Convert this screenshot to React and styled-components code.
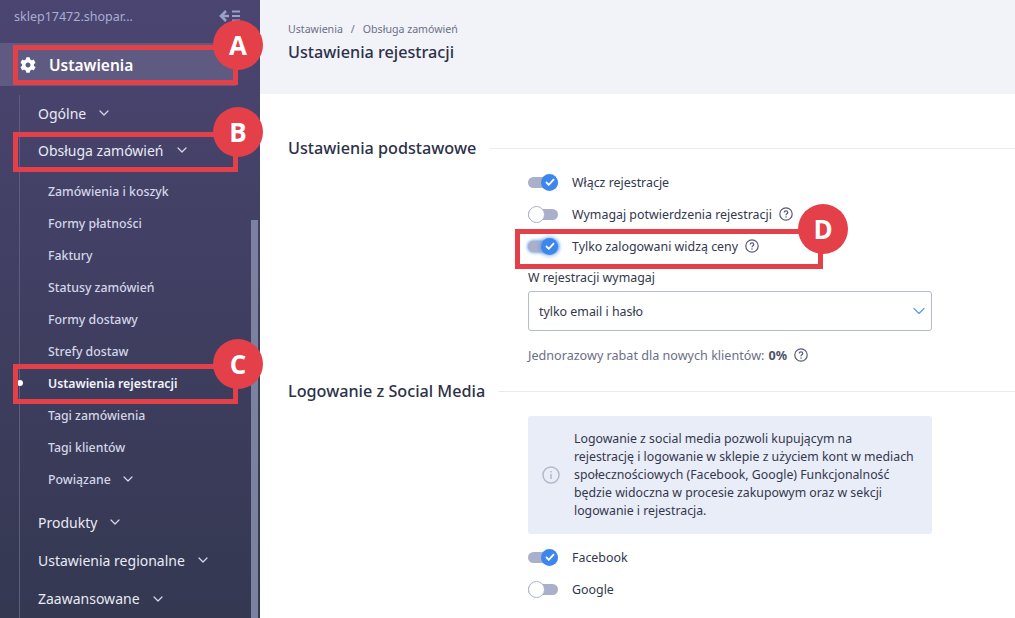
import React from 'react';
import styled, { createGlobalStyle } from 'styled-components';
import { FaCog } from 'react-icons/fa';
import { ChevronDown } from 'lucide-react';

const GlobalStyle = createGlobalStyle`
    html, body {
        margin: 0;
        padding: 0;
        background: #fff;
    }
    * {
        box-sizing: border-box;
    }
`

const Page = styled.div`
    position: relative;
    display: flex;
    width: 1015px;
    height: 618px;
    overflow: hidden;
    font-family: "Noto Sans", "Open Sans", sans-serif;
    color: #33374d;
`

const Sidebar = styled.aside`
    position: relative;
    flex: 0 0 260px;
    height: 618px;
    overflow: hidden;
    background: linear-gradient(180deg, #4b4571 0%, #343851 100%);
    color: #e6e8f2;
`

const ShopBar = styled.div`
    display: flex;
    align-items: center;
    justify-content: space-between;
    height: 43px;
    padding: 0 19px 11px 14px;
    font-size: 12.5px;
    color: #a9aed0;
`

const ActiveItem = styled.div`
    display: flex;
    align-items: center;
    gap: 13px;
    width: 236px;
    height: 43px;
    padding-left: 20px;
    background: #5f5a81;
    color: #fff;
    font-size: 15.5px;
    font-weight: 600;
`

const Tree = styled.nav`
    margin: 9px 0 0 19px;
    border-left: 1px solid #5d5d80;
`

const GroupRow = styled.div`
    display: flex;
    align-items: center;
    gap: 10px;
    height: ${p => p.$h}px;
    padding-left: 18px;
    font-size: 14px;
    color: #e8eaf4;
`

const SubList = styled.div`
    margin-top: 6px;
    margin-bottom: 8px;
`

const SubRow = styled.div`
    position: relative;
    display: flex;
    align-items: center;
    gap: 9px;
    height: 32px;
    padding-left: 28px;
    font-size: 12.3px;
    color: ${p => (p.$active ? '#f2f3fa' : '#d3d6e8')};
    font-weight: ${p => (p.$active ? 600 : 500)};
`

const Bullet = styled.span`
    position: absolute;
    left: -3px;
    top: 13px;
    width: 6px;
    height: 6px;
    border-radius: 50%;
    background: #fff;
`

const Scrollbar = styled.div`
    position: absolute;
    left: 251px;
    top: 220px;
    bottom: 0;
    width: 7px;
    background: #7b829f;
`

const Main = styled.main`
    flex: 1;
    min-width: 0;
`

const Header = styled.header`
    height: 94px;
    padding: 21px 28px 0;
    background: #f2f3f8;
`

const Crumbs = styled.div`
    display: flex;
    gap: 8px;
    font-size: 10.6px;
    line-height: 16px;
    color: #6b6f88;
`

const PageTitle = styled.h1`
    margin: 4px 0 0;
    font-size: 16.2px;
    line-height: 22px;
    font-weight: 500;
    color: #2c3148;
`

const Content = styled.div`
    padding: 43px 0 0 28px;
`

const SectionHead = styled.div`
    display: flex;
    align-items: center;
    gap: 14px;
    height: 22px;
    margin-bottom: ${p => p.$mb}px;
`

const SectionTitle = styled.h2`
    margin: 0;
    font-size: 16.2px;
    font-weight: 500;
    white-space: nowrap;
    color: #2c3148;
`

const Rule = styled.div`
    flex: 1;
    height: 1px;
    background: #e8e9ee;
`

const FormCol = styled.div`
    width: 404px;
    margin-left: 240px;
`

const ToggleRow = styled.div`
    display: flex;
    align-items: center;
    height: 32px;
    font-size: 12.4px;
    color: #33374d;
`

const ToggleTrack = styled.span`
    position: relative;
    flex: 0 0 30px;
    width: 30px;
    height: 11px;
    margin-right: 14px;
    border-radius: 6px;
    background: #aab0cb;
    box-shadow: ${p => (p.$glow ? '0 0 3px 1px rgba(61, 134, 238, 0.7)' : 'none')};
`

const ToggleKnob = styled.span`
    position: absolute;
    top: -3px;
    left: ${p => (p.$on ? '13px' : '0')};
    display: flex;
    align-items: center;
    justify-content: center;
    width: 17px;
    height: 17px;
    border-radius: 50%;
    background: ${p => (p.$on ? '#3d86ee' : '#fff')};
    border: ${p => (p.$on ? 'none' : '1px solid #aab0cb')};
    box-shadow: ${p => (p.$glow ? '0 0 4px 1px rgba(61, 134, 238, 0.6)' : 'none')};
`

const HelpWrap = styled.span`
    display: inline-flex;
    margin-left: 7px;
`

const FieldLabel = styled.div`
    height: 13px;
    margin-top: 9px;
    font-size: 12.4px;
    line-height: 13px;
    color: #33374d;
`

const Select = styled.div`
    display: flex;
    align-items: center;
    justify-content: space-between;
    height: 40px;
    margin-top: 7px;
    padding: 0 2px 0 10px;
    border: 1px solid #b4bad2;
    border-radius: 3px;
    font-size: 12.4px;
    color: #33374d;
`

const Discount = styled.div`
    display: flex;
    align-items: center;
    height: 20px;
    margin-top: 14px;
    margin-bottom: 15px;
    font-size: 12.6px;
    color: #6b6f88;

    b {
        margin-left: 4px;
        font-weight: 700;
        color: #4d5168;
    }
`

const InfoBox = styled.div`
    display: flex;
    align-items: center;
    gap: 14px;
    height: 118px;
    padding: 0 10px 0 14px;
    margin-bottom: 7px;
    border-radius: 3px;
    background: #e9edf8;
    font-size: 12.3px;
    line-height: 18px;
    color: #33374d;
`

const Mark = styled.div`
    position: absolute;
    border: 5px solid #e3404a;
`

const Badge = styled.div`
    position: absolute;
    display: flex;
    align-items: center;
    justify-content: center;
    width: 50px;
    height: 50px;
    border-radius: 50%;
    background: #e3404a;
    color: #fff;
    font-family: "Open Sans", "Noto Sans", sans-serif;
    font-size: 26px;
    font-weight: 700;
`

const Chevron = () => <ChevronDown size={16} strokeWidth={1.8} color="#d6d9ea" />

const Check = () => (
    <svg width="10" height="8" viewBox="0 0 10 8" fill="none">
        <path d="M1 4l2.8 2.8L9 1.2" stroke="#fff" strokeWidth="1.8" />
    </svg>
)

const Help = () => (
    <HelpWrap>
        <svg width="14" height="14" viewBox="0 0 14 14" fill="none">
            <circle cx="7" cy="7" r="6.2" stroke="#565b78" strokeWidth="1.2" />
            <path d="M5.2 5.6c0-1 .8-1.7 1.8-1.7s1.8.7 1.8 1.6c0 1.3-1.8 1.3-1.8 2.7" stroke="#565b78" strokeWidth="1.2" />
            <circle cx="7" cy="10.1" r=".75" fill="#565b78" />
        </svg>
    </HelpWrap>
)

const Toggle = ({ on, glow, children, help }) => (
    <ToggleRow>
        <ToggleTrack $glow={glow}>
            <ToggleKnob $on={on} $glow={glow}>{on && <Check />}</ToggleKnob>
        </ToggleTrack>
        {children}
        {help && <Help />}
    </ToggleRow>
)

const subItems = ['Zamówienia i koszyk', 'Formy płatności', 'Faktury', 'Statusy zamówień', 'Formy dostawy', 'Strefy dostaw']

export default function App() {
    return (
        <Page>
            <GlobalStyle />
            <Sidebar>
                <ShopBar>
                    <span>sklep17472.shopar...</span>
                    <svg width="23" height="14" viewBox="0 0 23 14" fill="none">
                        <path d="M8 2L3 7l5 5M3 7h8" stroke="#9aa1c9" strokeWidth="2.6" />
                        <path d="M14 2.5h8M14 7h8M14 11.5h8" stroke="#9aa1c9" strokeWidth="2.2" />
                    </svg>
                </ShopBar>
                <ActiveItem>
                    <FaCog size={16} color="#fff" />
                    Ustawienia
                </ActiveItem>
                <Tree>
                    <GroupRow $h={36}>Ogólne <Chevron /></GroupRow>
                    <GroupRow $h={38}>Obsługa zamówień <Chevron /></GroupRow>
                    <SubList>
                        {subItems.map(name => <SubRow key={name}>{name}</SubRow>)}
                        <SubRow $active><Bullet />Ustawienia rejestracji</SubRow>
                        <SubRow>Tagi zamówienia</SubRow>
                        <SubRow>Tagi klientów</SubRow>
                        <SubRow>Powiązane <Chevron /></SubRow>
                    </SubList>
                    <GroupRow $h={38}>Produkty <Chevron /></GroupRow>
                    <GroupRow $h={38}>Ustawienia regionalne <Chevron /></GroupRow>
                    <GroupRow $h={39}>Zaawansowane <Chevron /></GroupRow>
                </Tree>
                <Scrollbar />
            </Sidebar>
            <Main>
                <Header>
                    <Crumbs><span>Ustawienia</span><span>/</span><span>Obsługa zamówień</span></Crumbs>
                    <PageTitle>Ustawienia rejestracji</PageTitle>
                </Header>
                <Content>
                    <SectionHead $mb={7}>
                        <SectionTitle>Ustawienia podstawowe</SectionTitle>
                        <Rule />
                    </SectionHead>
                    <FormCol>
                        <Toggle on>Włącz rejestracje</Toggle>
                        <Toggle help>Wymagaj potwierdzenia rejestracji</Toggle>
                        <Toggle on glow help>Tylko zalogowani widzą ceny</Toggle>
                        <FieldLabel>W rejestracji wymagaj</FieldLabel>
                        <Select>
                            tylko email i hasło
                            <ChevronDown size={20} strokeWidth={1.4} color="#5c9bf0" />
                        </Select>
                        <Discount>Jednorazowy rabat dla nowych klientów: <b>0%</b><Help /></Discount>
                    </FormCol>
                    <SectionHead $mb={14}>
                        <SectionTitle>Logowanie z Social Media</SectionTitle>
                        <Rule />
                    </SectionHead>
                    <FormCol>
                        <InfoBox>
                            <svg width="18" height="18" viewBox="0 0 18 18" fill="none" style={{ flex: 'none' }}>
                                <circle cx="9" cy="9" r="8" stroke="#b3b8cd" strokeWidth="1.5" />
                                <path d="M9 8v5M9 5v1.4" stroke="#b3b8cd" strokeWidth="1.5" />
                            </svg>
                            <span>Logowanie z social media pozwoli kupującym na<br />rejestrację i logowanie w sklepie z użyciem kont w mediach społecznościowych (Facebook, Google) Funkcjonalność będzie widoczna w procesie zakupowym oraz w sekcji logowanie i rejestracja.</span>
                        </InfoBox>
                        <Toggle on>Facebook</Toggle>
                        <Toggle>Google</Toggle>
                    </FormCol>
                </Content>
            </Main>

            <Mark style={{ left: 13, top: 45, width: 225, height: 40 }} />
            <Badge style={{ left: 213, top: 20 }}>A</Badge>
            <Mark style={{ left: 13, top: 132, width: 225, height: 40 }} />
            <Badge style={{ left: 213, top: 107 }}>B</Badge>
            <Mark style={{ left: 13, top: 364, width: 225, height: 40 }} />
            <Badge style={{ left: 213, top: 339 }}>C</Badge>
            <Mark style={{ left: 515, top: 229, width: 308, height: 40 }} />
            <Badge style={{ left: 798, top: 204 }}>D</Badge>
        </Page>
    )
}
